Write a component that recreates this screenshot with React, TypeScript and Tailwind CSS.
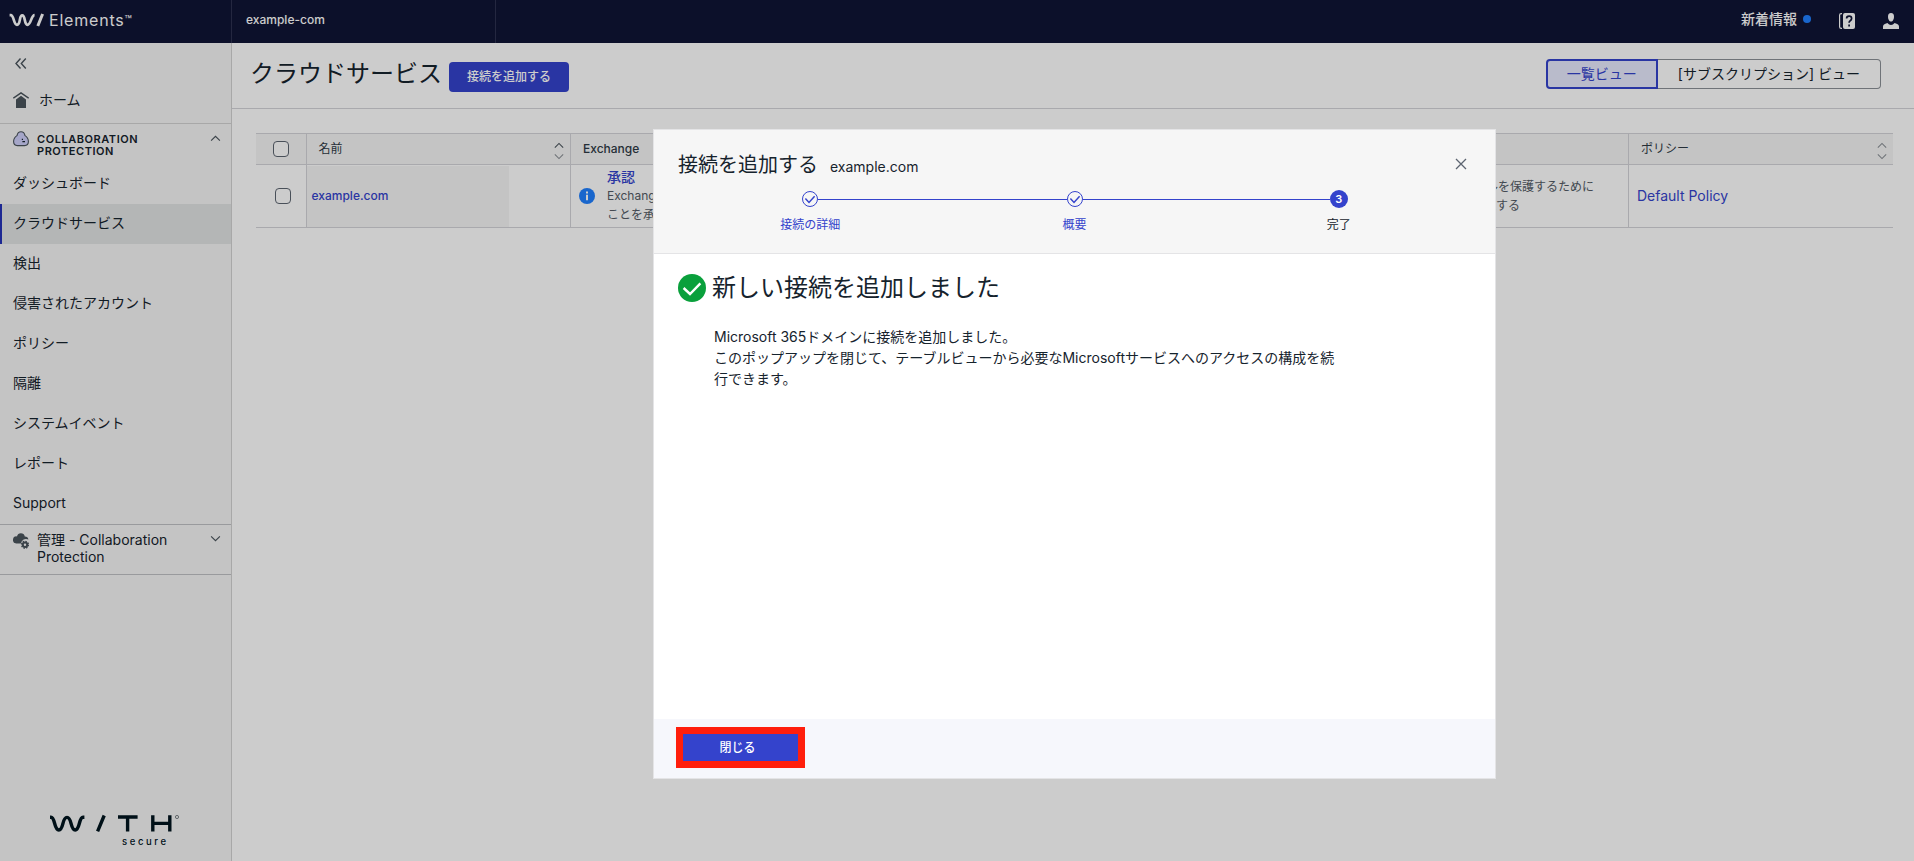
import React from "react";

const navItems = [
  { label: "ダッシュボード" },
  { label: "クラウドサービス", active: true },
  { label: "検出" },
  { label: "侵害されたアカウント" },
  { label: "ポリシー" },
  { label: "隔離" },
  { label: "システムイベント" },
  { label: "レポート" },
  { label: "Support" },
];

function Chevron({ up = false, className = "" }: { up?: boolean; className?: string }) {
  return (
    <svg viewBox="0 0 12 8" fill="none" stroke="currentColor" strokeWidth="1.3" className={className} aria-hidden="true">
      <path d={up ? "M1 6.5L6 1.5L11 6.5" : "M1 1.5L6 6.5L11 1.5"} />
    </svg>
  );
}

function Sorter({ strong = false }: { strong?: boolean }) {
  return (
    <button type="button" aria-label="並べ替え" className="flex flex-col gap-1 pt-1">
      <Chevron up className={strong ? "h-[7px] w-[10px] text-[#4a545c]" : "h-[7px] w-[10px] text-[#8b9096]"} />
      <Chevron className="h-[7px] w-[10px] text-[#8b9096]" />
    </button>
  );
}

function Header() {
  return (
    <header className="flex h-[43px] shrink-0 items-stretch bg-[#0f1435] text-white">
      <div className="flex w-[232px] items-center border-r border-[#2d3150] pb-[3px] pl-[9px]">
        <svg viewBox="0 0 36 14" className="h-[14px] w-[36px]" fill="none" stroke="#ffffff" strokeWidth="2.7" aria-hidden="true">
          <path d="M0.6 2.2H1.8C5 2.2 4.6 11.8 8 11.8C12 11.8 9.8 2.4 13.2 2.4C16.8 2.4 14.8 11.8 18.4 11.8C22.2 11.8 22 2.2 25.6 2.2" />
          <path d="M28.8 13L33.6 1" strokeWidth="3" />
        </svg>
        <span className="pl-1 text-base leading-5 tracking-wider">Elements</span>
        <span className="text-xs leading-5">™</span>
      </div>
      <div className="flex w-[264px] items-center border-r border-[#2d3150] pb-[3px] pl-[14px] text-xs font-medium">example-com</div>
      <div className="ml-auto flex items-center gap-7 pr-[15px] pb-[6px]">
        <a href="#news" className="flex items-center gap-1.5 text-sm font-medium">
          新着情報
          <span className="h-2 w-2 rounded-full bg-[#2080ff]" />
        </a>
        <button type="button" aria-label="ヘルプ" className="mt-1">
          <svg viewBox="0 0 16 16" className="h-4 w-4" aria-hidden="true">
            <path d="M3 0.6H2.2Q0.6 0.6 0.6 2.2V13.8Q0.6 15.4 2.2 15.4H3" fill="none" stroke="#fff" strokeWidth="1.2" />
            <rect x="4" width="12" height="16" rx="2" fill="#fff" />
            <path d="M7.6 5.6Q7.6 3.2 10.1 3.2Q12.6 3.2 12.6 5.4Q12.6 6.8 11.2 7.7Q10.1 8.4 10.1 9.8M10.1 11.6V13.4" fill="none" stroke="#0f1435" strokeWidth="1.7" />
          </svg>
        </button>
        <button type="button" aria-label="アカウント" className="mt-1">
          <svg viewBox="0 0 16 16" className="h-4 w-4" fill="#fff" aria-hidden="true">
            <path d="M8 0C10.2 0 11 1.4 11 3.4C11 6 9.8 8.6 8 8.6C6.2 8.6 5 6 5 3.4C5 1.4 5.8 0 8 0Z" />
            <path d="M0 16V13.4Q0 11.6 1.8 11L4.4 10Q6 12 8 12Q10 12 11.6 10L14.2 11Q16 11.6 16 13.4V16Z" />
          </svg>
        </button>
      </div>
    </header>
  );
}

function Sidebar() {
  return (
    <aside className="flex w-[232px] shrink-0 flex-col border-r border-[#d2d2d2] bg-[#f6f6f6] text-[#16232d]">
      <button type="button" aria-label="メニューを折りたたむ" className="flex h-10 items-center pl-[15px] text-[#4a545c]">
        <svg viewBox="0 0 12 11" className="h-[11px] w-3" fill="none" stroke="currentColor" strokeWidth="1.4" aria-hidden="true">
          <path d="M5.5 0.5L1 5.5L5.5 10.5M10.8 0.5L6.3 5.5L10.8 10.5" />
        </svg>
      </button>
      <a href="#home" className="flex h-[41px] items-center gap-[10px] border-b border-[#d2d2d2] pl-[13px] pb-[6px] text-sm">
        <svg viewBox="0 0 16 16" className="h-4 w-4" aria-hidden="true">
          <path d="M0.3 6.2L8 0.9L15.7 6.2" fill="none" stroke="#4a545c" strokeWidth="1.5" />
          <path d="M8 3.8L13 7.4V16H3V7.4Z" fill="#4a545c" />
        </svg>
        ホーム
      </a>
      <button type="button" className="flex h-10 items-start pt-[7px] pl-[13px] pr-[10px] text-left">
        <svg viewBox="0 0 16 16" className="h-4 w-4 shrink-0" aria-hidden="true">
          <path d="M8 0.8C10.4 0.8 11.6 2.4 12 4.6C14.2 6 15.4 8.6 15.4 10.6C15.4 13.4 14 14.6 11.6 14.6H4.4C2 14.6 0.6 13.4 0.6 10.6C0.6 8.6 1.8 6 4 4.6C4.4 2.4 5.6 0.8 8 0.8Z" fill="#cfd0fb" stroke="#4a545c" strokeWidth="1.1" />
          <path d="M8.8 8.4H10M9.4 10.6H12" stroke="#16232d" strokeWidth="1.1" />
        </svg>
        <span className="flex-1 pt-0.5 pl-2 text-[11px] leading-3 font-semibold tracking-wider">COLLABORATION PROTECTION</span>
        <Chevron up className="mt-1 h-[7px] w-[11px] text-[#4a545c]" />
      </button>
      <nav className="flex flex-col text-sm">
        {navItems.map((item) => (
          <a
            key={item.label}
            href="#nav"
            className={
              item.active
                ? "flex h-10 items-center border-l-2 border-[#2533b8] bg-[#e1e4e4] pb-[3px] pl-[11px]"
                : "flex h-10 items-center pb-[3px] pl-[13px]"
            }
          >
            {item.label}
          </a>
        ))}
      </nav>
      <button type="button" className="flex items-start border-y border-[#c0c1c5] pt-[6px] pr-[10px] pb-[9px] pl-[13px] text-left">
        <svg viewBox="0 0 16 16" className="mt-0.5 h-4 w-4 shrink-0" fill="#4a545c" aria-hidden="true">
          <path d="M4 3.4A4 4 0 0 1 11.8 3.4A3.6 3.6 0 0 1 15.4 6.6A5 5 0 0 0 8 10.6H3.2A3.6 3.6 0 0 1 4 3.4Z" />
          <circle cx="12" cy="11.8" r="2.2" fill="none" stroke="#4a545c" strokeWidth="2" />
          <circle cx="12" cy="11.8" r="3.4" fill="none" stroke="#4a545c" strokeWidth="1.4" strokeDasharray="1.4 1.27" />
        </svg>
        <span className="flex-1 pl-2 text-sm leading-[17px]">
          管理 - Collaboration
          <br />
          Protection
        </span>
        <Chevron className="mt-1 h-[7px] w-[11px] text-[#4a545c]" />
      </button>
      <svg viewBox="0 0 132 34" className="mt-auto mb-[13px] ml-[49px] h-[34px] w-[132px]" role="img" aria-label="WithSecure">
        <g fill="none" stroke="#00141e" strokeWidth="3.4">
          <path d="M1 3.2H2C6.2 3.2 5 16 9.8 16C15 16 12.8 3.4 18 3.4C23.2 3.4 21 16 26.2 16C31 16 29.8 3.2 34 3.2H35.4" />
          <path d="M48.6 17.4L55.2 1.5M69 3H88.6M78.6 2V17.4M103.8 1.2V17.4M120.8 1.2V17.4M103.8 9.4H120.8" />
        </g>
        <text x="73" y="30.5" fontSize="9.5" fontWeight="500" letterSpacing="2.6" fill="#00141e" fontFamily="Inter, sans-serif">secure</text>
        <circle cx="128" cy="3" r="1.6" fill="none" stroke="#4a545c" strokeWidth="0.7" />
      </svg>
    </aside>
  );
}

const headCell = "border-r border-[#d4d4d9] px-3 text-left font-medium";
const bodyCell = "border-r border-[#d4d4d9] align-middle";

function Authorize({ service, rest }: { service: string; rest: string }) {
  return (
    <div className="flex items-center gap-3 pl-2 text-xs leading-[19px] text-[#545c66]">
      <svg viewBox="0 0 16 16" className="h-4 w-4 shrink-0" aria-hidden="true">
        <circle cx="8" cy="8" r="8" fill="#2080ff" />
        <path d="M8 3.6V5.4M8 6.8V12.2" stroke="#fff" strokeWidth="2" />
      </svg>
      <div className="pb-0.5">
        <a href="#approve" className="block text-sm leading-[19px] font-medium text-[#3443cc]">承認</a>
        {service}を保護する
        <br />
        {rest}
      </div>
    </div>
  );
}

function ServicesTable() {
  return (
    <table className="w-full table-fixed border-collapse border-y border-[#d4d4d9] text-xs">
      <colgroup>
        <col className="w-[50px]" />
        <col />
        <col />
        <col />
        <col />
        <col />
        <col />
      </colgroup>
      <thead>
        <tr className="h-[31px] border-b border-[#d4d4d9] bg-[#f6f6f6] text-[#2f3a45]">
          <th className="border-r border-[#d4d4d9]">
            <input type="checkbox" aria-label="すべて選択" className="mx-auto block h-4 w-4 appearance-none rounded border border-[#5c6470] bg-white" />
          </th>
          <th className="border-r border-[#d4d4d9] pr-1.5 pl-3 text-left font-normal">
            <div className="flex items-center justify-between">名前<Sorter strong /></div>
          </th>
          <th className={headCell}>Exchange</th>
          <th className={headCell}>OneDrive</th>
          <th className={headCell}>SharePoint</th>
          <th className={headCell}>Teams</th>
          <th className="pr-1.5 pl-3 text-left font-normal">
            <div className="flex items-center justify-between">ポリシー<Sorter /></div>
          </th>
        </tr>
      </thead>
      <tbody>
        <tr className="h-[63px]">
          <td className={bodyCell}>
            <input type="checkbox" aria-label="example.comを選択" className="ml-[19px] block h-4 w-4 appearance-none rounded border border-[#5c6470] bg-white" />
          </td>
          <td className="border-r border-[#d4d4d9]">
            <div className="flex h-[61px] w-[202px] items-center bg-[#f6f6f6] pl-[5px]">
              <a href="#example" className="font-medium text-[#3443cc]">example.com</a>
            </div>
          </td>
          <td className={bodyCell}><Authorize service="Exchange Online" rest="ことを承認する" /></td>
          <td className={bodyCell}><Authorize service="OneDrive" rest="ことを承認する" /></td>
          <td className={bodyCell}><Authorize service="SharePoint" rest="ことを承認する" /></td>
          <td className="border-r border-[#d4d4d9] pl-9 align-middle leading-[19px] text-[#545c66]">
            Teamsのファイルを保護するために
            <br />
            アクセス権を承認する
          </td>
          <td className="pl-2 text-sm">
            <a href="#policy" className="text-[#3443cc]">Default Policy</a>
          </td>
        </tr>
      </tbody>
    </table>
  );
}

function StepDone() {
  return (
    <svg viewBox="0 0 16 16" className="my-px h-4 w-4 shrink-0" fill="none" stroke="#3443cc" aria-hidden="true">
      <circle cx="8" cy="8" r="7.5" />
      <path d="M3.4 7.6L7 11.4L12.6 5.2" strokeWidth="1.5" />
    </svg>
  );
}

function Stepper() {
  return (
    <ol className="grid grid-cols-3 px-6 text-center text-xs">
      <li className="flex flex-col items-center gap-[9px] text-[#3443cc]">
        <div className="flex w-full items-center">
          <span className="flex-1" />
          <StepDone />
          <span className="h-px flex-1 bg-[#3443cc]" />
        </div>
        接続の詳細
      </li>
      <li className="flex flex-col items-center gap-[9px] text-[#3443cc]">
        <div className="flex w-full items-center">
          <span className="h-px flex-1 bg-[#3443cc]" />
          <StepDone />
          <span className="h-px flex-1 bg-[#3443cc]" />
        </div>
        概要
      </li>
      <li className="flex flex-col items-center gap-[9px] text-[#16232d]">
        <div className="flex w-full items-center">
          <span className="h-px flex-1 bg-[#3443cc]" />
          <span className="flex h-[18px] w-[18px] items-center justify-center rounded-full bg-[#3443cc] text-[11px] leading-none font-semibold text-white">3</span>
          <span className="flex-1" />
        </div>
        完了
      </li>
    </ol>
  );
}

function Dialog() {
  return (
    <div className="fixed inset-0 flex items-start justify-center bg-black/20 pt-[129px] pl-[235px]">
      <div role="dialog" aria-modal="true" aria-labelledby="dialog-title" className="flex min-h-[650px] w-full max-w-[843px] flex-col border border-[#e4e4e6] bg-white text-[#16232d]">
        <div className="h-[124px] border-b border-[#e4e4e6] bg-[#f6f6f6]">
          <div className="flex items-baseline gap-3 px-6 pt-5">
            <h2 id="dialog-title" className="text-xl leading-[30px]">接続を追加する</h2>
            <span className="text-sm">example.com</span>
            <button type="button" aria-label="ダイアログを閉じる" className="mr-1 mb-0.5 ml-auto self-center text-[#5c6470]">
              <svg viewBox="0 0 12 12" className="h-3 w-3" fill="none" stroke="currentColor" strokeWidth="1.3" aria-hidden="true">
                <path d="M1 1L11 11M11 1L1 11" />
              </svg>
            </button>
          </div>
          <div className="pt-[10px]">
            <Stepper />
          </div>
        </div>
        <div className="flex-1 px-6 pt-4">
          <div className="flex items-center gap-1.5">
            <svg viewBox="0 0 28 28" className="h-7 w-7" aria-hidden="true">
              <circle cx="14" cy="14" r="14" fill="#0aa03c" />
              <path d="M5.6 14L12 20L22.4 9.4" fill="none" stroke="#fff" strokeWidth="2.4" />
            </svg>
            <h3 className="text-2xl leading-9">新しい接続を追加しました</h3>
          </div>
          <p className="max-w-[664px] pt-5 pl-9 text-sm leading-[21px]">
            Microsoft 365ドメインに接続を追加しました。
            <br />
            このポップアップを閉じて、テーブルビューから必要なMicrosoftサービスへのアクセスの構成を続行できます。
          </p>
        </div>
        <div className="flex h-[59px] items-start bg-[#f6f7fc] pt-2 pl-[22px]">
          <button type="button" className="h-[41px] w-[129px] border-[7px] border-[#ff1e0c] bg-[#3443cc] pr-1.5 text-xs font-medium text-white">閉じる</button>
        </div>
      </div>
    </div>
  );
}

export default function App() {
  return (
    <div className="flex min-h-screen flex-col bg-white font-['Inter','Noto_Sans_CJK_JP',sans-serif]">
      <Header />
      <div className="flex flex-1">
        <Sidebar />
        <main className="min-w-0 flex-1">
          <div className="flex h-[66px] items-center border-b border-[#d4d4d9] pr-[33px] pl-[18px] text-[#16232d]">
            <h1 className="pb-1 text-2xl leading-9">クラウドサービス</h1>
            <button type="button" className="mt-0.5 ml-[7px] h-[30px] rounded bg-[#3443cc] px-[18px] text-xs font-medium text-white">接続を追加する</button>
            <div className="mb-1 ml-auto flex h-[30px] text-sm">
              <button type="button" className="rounded-l border-2 border-[#3443cc] bg-[#e8eafe] px-[19px] text-[#3443cc]">一覧ビュー</button>
              <button type="button" className="rounded-r border border-l-0 border-[#8b9096] px-5">[サブスクリプション] ビュー</button>
            </div>
          </div>
          <div className="pt-6 pr-[21px] pl-6">
            <ServicesTable />
          </div>
        </main>
      </div>
      <Dialog />
    </div>
  );
}
